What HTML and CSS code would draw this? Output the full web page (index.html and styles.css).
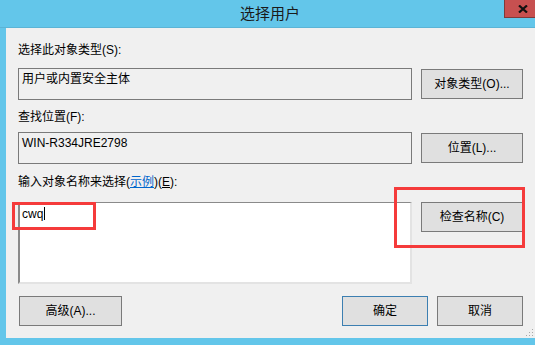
FILE: index.html
```html
<!DOCTYPE html>
<html lang="zh-CN">
<head>
    <meta charset="utf-8">
    <title>选择用户</title>
    <link rel="stylesheet" href="styles.css">
</head>
<body>
    <div class="titlebar">
        <span class="title">选择用户</span>
        <div class="close">
            <svg width="10" height="8" viewBox="0 0 10 8">
                <path d="M1 0.5 L9 7.5 M9 0.5 L1 7.5" stroke="#111" stroke-width="2.2" fill="none"/>
            </svg>
        </div>
    </div>

    <div class="client">
        <div class="label">选择此对象类型(S):</div>
        <div class="row">
            <div class="field">用户或内置安全主体</div>
            <div class="btn btn-top">对象类型(O)...</div>
        </div>

        <div class="label label-2">查找位置(F):</div>
        <div class="row row-2">
            <div class="field">WIN-R334JRE2798</div>
            <div class="btn btn-top">位置(L)...</div>
        </div>

        <div class="label label-3">输入对象名称来选择(<a class="link">示例</a>)(<u>E</u>):</div>
        <div class="row row-3">
            <div class="names">cwq<span class="caret"></span></div>
            <div class="btn btn-check">检查名称(C)</div>
        </div>

        <div class="footer">
            <div class="btn btn-adv">高级(A)...</div>
            <div class="spacer"></div>
            <div class="btn btn-small btn-default">确定</div>
            <div class="btn btn-small">取消</div>
        </div>

        <!-- red annotation boxes -->
        <div class="mark mark-input"></div>
        <div class="mark mark-check"></div>

        <svg class="grip" width="9" height="9" viewBox="0 0 9 9">
            <rect x="7" y="1" width="1" height="1" fill="#a8a8a8"/>
            <rect x="4" y="4" width="1" height="1" fill="#a8a8a8"/>
            <rect x="7" y="4" width="1" height="1" fill="#a8a8a8"/>
            <rect x="1" y="7" width="1" height="1" fill="#a8a8a8"/>
            <rect x="4" y="7" width="1" height="1" fill="#a8a8a8"/>
            <rect x="7" y="7" width="1" height="1" fill="#a8a8a8"/>
        </svg>
    </div>
</body>
</html>
```

FILE: styles.css
```css
html, body {
    margin: 0;
    padding: 0;
}

body {
    width: 535px;
    height: 345px;
    overflow: hidden;
    background: #63c6ea;
    font-family: "Liberation Sans", "Noto Sans CJK SC", sans-serif;
    font-size: 12px;
    line-height: 16px;
    color: #000000;
}

.titlebar {
    position: relative;
    height: 27px;
    border-bottom: 1px solid #5bb4d6;
    display: flex;
    justify-content: center;
}

.title {
    font-size: 15px;
    line-height: 27px;
    color: #1a1a1a;
    margin-left: 5px;
}

.close {
    position: absolute;
    top: 0;
    left: 504px;
    width: 40px;
    height: 18px;
    background: #c75050;
    border-left: 1px solid #7f3a3a;
    border-bottom: 1px solid #7f3a3a;
    box-sizing: border-box;
    display: flex;
    align-items: center;
    padding-left: 13px;
}

.close svg {
    display: block;
}

.client {
    position: relative;
    margin-left: 6px;
    height: 310px;
    background: #f0f0f0;
    padding: 14px 12px 0 12px;
    box-sizing: border-box;
}

.label {
    height: 16px;
}

.label-2 {
    margin-top: 9px;
}

.label-3 {
    margin-top: 10px;
}

.link {
    color: #0066cc;
    text-decoration: underline;
}

.row {
    display: grid;
    grid-template-columns: 394px 102px;
    column-gap: 9px;
    margin-top: 10px;
    align-items: start;
}

.row-2 {
    margin-top: 7px;
}

.row-3 {
    margin-top: 12px;
}

.field {
    height: 32px;
    box-sizing: border-box;
    border: 1px solid #7a7a7a;
    padding: 2px 3px;
    background: #f0f0f0;
}

.names {
    height: 82px;
    box-sizing: border-box;
    background: #ffffff;
    border-top: 1px solid #8a8a8a;
    border-left: 2px solid #8a8a8a;
    border-right: 2px solid #e3e3e3;
    border-bottom: 2px solid #e3e3e3;
    padding: 3px 2px;
}

.caret {
    display: inline-block;
    width: 1px;
    height: 13px;
    background: #000000;
    vertical-align: -2px;
    margin-left: 1px;
}

.btn {
    height: 30px;
    box-sizing: border-box;
    border: 1px solid #7a7a7a;
    background: #e0e0e0;
    display: flex;
    align-items: center;
    justify-content: center;
}

.btn-top {
    margin-top: 1px;
}

.footer {
    display: flex;
    margin-top: 12px;
    column-gap: 9px;
}

.btn-adv {
    width: 103px;
    margin-left: 1px;
}

.spacer {
    flex: 1;
}

.btn-small {
    width: 86px;
}

.btn-default {
    border-color: #3c7fb1;
}

.mark {
    position: absolute;
    border: 3px solid #f53b3b;
    box-sizing: border-box;
}

.mark-input {
    left: 6px;
    top: 174px;
    width: 84px;
    height: 28px;
}

.mark-check {
    left: 388px;
    top: 159px;
    width: 131px;
    height: 61px;
}

.grip {
    position: absolute;
    right: 1px;
    bottom: 1px;
}
```
